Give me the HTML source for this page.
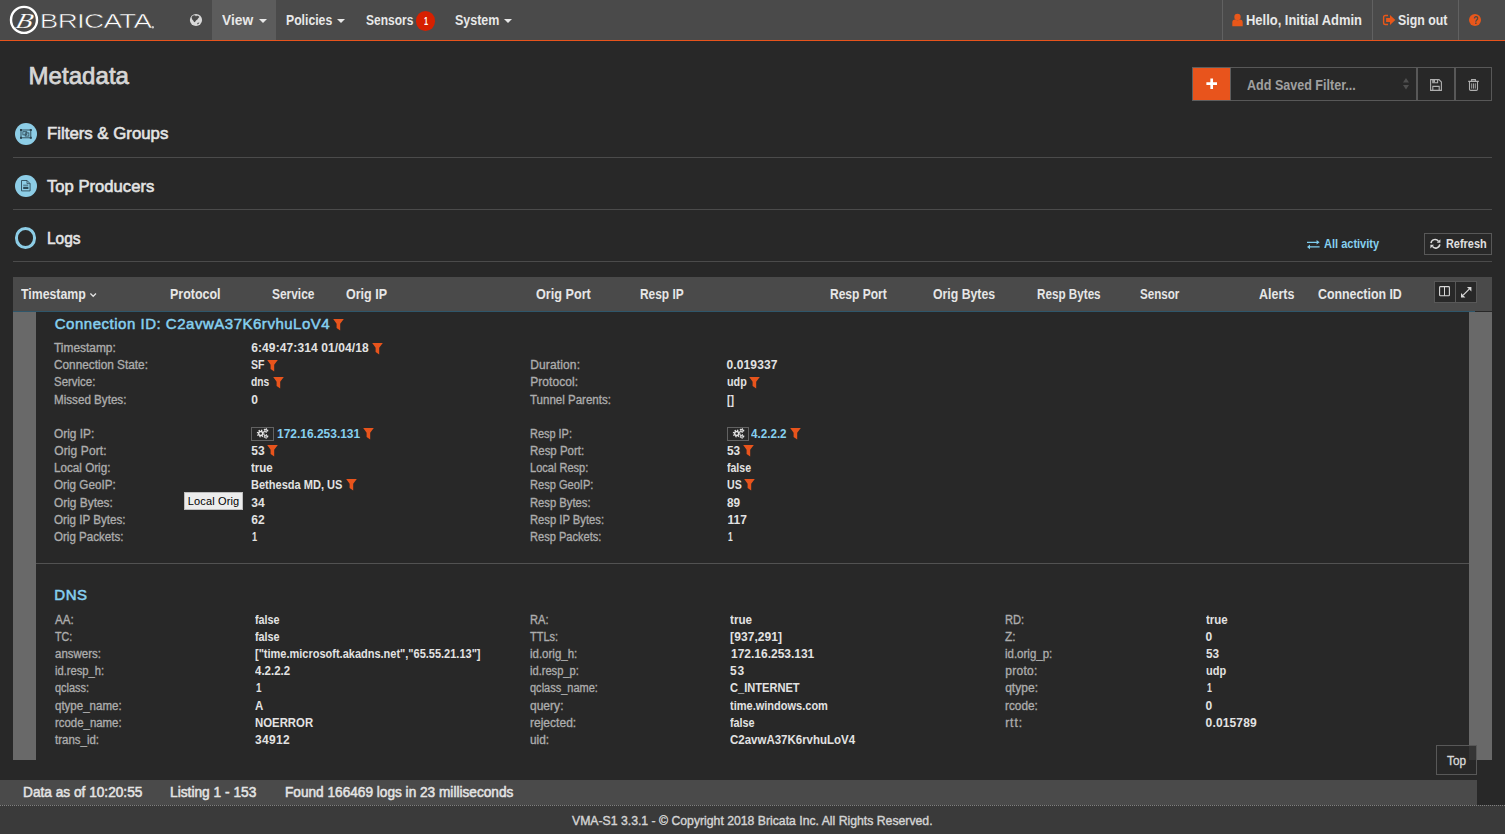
<!DOCTYPE html>
<html lang="en">
<head>
<meta charset="utf-8">
<title>Bricata - Metadata</title>
<style>
*{box-sizing:border-box}
html,body{margin:0;padding:0}
body{width:1505px;height:834px;overflow:hidden;background:#282828;font-family:"Liberation Sans",sans-serif;position:relative}
.b{position:absolute}
.t{position:absolute;white-space:pre;line-height:1;transform-origin:0 0;font-family:"Liberation Sans",sans-serif}
svg{position:absolute;overflow:visible}
.nav{left:0;top:0;width:1505px;height:40px;background:#4a4a4a}
.navline{left:0;top:40px;width:1505px;height:1px;background:#e8541c}
.sep{top:0;width:1px;height:40px;background:#616161}
.hr{left:13px;width:1479px;height:1px;background:#4b4b4b}
.btn{border:1px solid #585858;background:#282828}
</style>
</head>
<body>
<!-- navbar -->
<div class="b nav"></div>
<div class="b" style="left:212px;top:0;width:64px;height:40px;background:#5c5c5c"></div>
<div class="b navline"></div>
<div class="b sep" style="left:1222px"></div>
<div class="b sep" style="left:1372px"></div>
<div class="b sep" style="left:1458px"></div>

<!-- logo -->
<svg style="left:0;top:0" width="170" height="40" viewBox="0 0 170 40">
  <circle cx="24" cy="19.9" r="13" fill="none" stroke="#fff" stroke-width="2.4"/>
  <text transform="translate(14.6 27.6) skewX(-16) scale(1.25 1)" font-family="Liberation Serif, serif" font-style="italic" font-size="21.5" fill="#fff" stroke="#4a4a4a" stroke-width="0.15">B</text>
  <text transform="translate(39.8 28.2) scale(1.39 1)" font-family="Liberation Sans, sans-serif" font-size="20" letter-spacing="-0.5" fill="#fff" stroke="#4a4a4a" stroke-width="0.5">BRICATA</text>
  <circle cx="152.8" cy="27.2" r="1.2" fill="#c8c8c8"/>
</svg>

<!-- globe -->
<svg style="left:189px;top:13px" width="14" height="14" viewBox="0 0 14 14">
  <circle cx="7" cy="7" r="6.1" fill="#d8d8d8"/>
  <path d="M2.6 4.6 L3.4 3 L5 2.2 L6.4 2.6 L7 3.6 L7.8 2.6 L9.4 3 L10.4 4 L9.2 5.2 L8.4 6.6 L7 7.4 L6.2 8.8 L5.2 9.2 L4.2 7.6 L3.2 6.4 Z" fill="#4a4a4a"/>
  <path d="M8.2 10 L10.4 9.4 L9.8 10.6 L8.6 11.4 Z" fill="#4a4a4a"/>
</svg>

<!-- carets -->
<svg style="left:258.5px;top:19.2px" width="8" height="4" viewBox="0 0 8 4"><path d="M0 0H8L4 4Z" fill="#e8e8e8"/></svg>
<svg style="left:337px;top:19.2px" width="8" height="4" viewBox="0 0 8 4"><path d="M0 0H8L4 4Z" fill="#e8e8e8"/></svg>
<svg style="left:504px;top:19.2px" width="8" height="4" viewBox="0 0 8 4"><path d="M0 0H8L4 4Z" fill="#e8e8e8"/></svg>

<!-- badge -->
<div class="b" style="left:415.8px;top:11.2px;width:19.6px;height:19.6px;border-radius:50%;background:#d62000"></div>

<!-- user icon -->
<svg style="left:1232px;top:13px" width="11" height="14" viewBox="0 0 11 14">
  <circle cx="5.5" cy="3.9" r="3.2" fill="#e8571a"/>
  <path d="M0.3 13.2 V9.6 Q0.3 6.6 3 6.5 Q5.5 8 8 6.5 Q10.7 6.6 10.7 9.6 V13.2 Z" fill="#e8571a"/>
</svg>
<!-- sign out icon -->
<svg style="left:1382px;top:14px" width="14" height="12" viewBox="0 0 14 12">
  <path d="M6 1.5 H3.4 Q1.6 1.5 1.6 3.3 V8.7 Q1.6 10.5 3.4 10.5 H6" fill="none" stroke="#e8571a" stroke-width="1.4"/>
  <path d="M4.1 4.1 H8 V0.9 L13.3 6 L8 11.1 V8 H4.1 Z" fill="#e8571a"/>
</svg>
<!-- question -->
<div class="b" style="left:1468.9px;top:13.8px;width:12.4px;height:12.4px;border-radius:50%;background:#e8571a"></div>

<!-- saved filter bar -->
<div class="b" style="left:1192px;top:67px;width:39px;height:34px;background:#e8541c;border:1px solid #5e5e5e"></div>
<div class="b btn" style="left:1231px;top:67px;width:186px;height:34px;border-left:none"></div>
<div class="b btn" style="left:1417px;top:67px;width:38px;height:34px"></div>
<div class="b btn" style="left:1455px;top:67px;width:37px;height:34px"></div>
<svg style="left:1205.8px;top:77.7px" width="11.4" height="11.4" viewBox="0 0 12 12"><path d="M4.6 0.4H7.4V4.6H11.6V7.4H7.4V11.6H4.6V7.4H0.4V4.6H4.6Z" fill="#fff"/></svg>
<svg style="left:1403px;top:78.3px" width="6" height="11.4" viewBox="0 0 6 11.4"><path d="M0 4.4L3 0L6 4.4Z M0 7L3 11.4L6 7Z" fill="#4f4f4f"/></svg>
<!-- save -->
<svg style="left:1430.4px;top:79px" width="12" height="12" viewBox="0 0 12 12">
  <path d="M0.6 0.6 H9 L11.4 3 V11.4 H0.6 Z" fill="none" stroke="#b0b0b0" stroke-width="1.1"/>
  <path d="M2.8 0.8 V3.8 H7.6 V0.8" fill="none" stroke="#b0b0b0" stroke-width="1.1"/><rect x="3.2" y="1" width="1.8" height="2.4" fill="#b0b0b0"/>
  <path d="M2.8 11.2 V7.4 H9.2 V11.2" fill="none" stroke="#b0b0b0" stroke-width="1.1"/>
</svg>
<!-- trash -->
<svg style="left:1468px;top:79px" width="11" height="12" viewBox="0 0 11 12">
  <path d="M0.2 2.4 H10.8 M3.6 2.2 V0.6 H7.4 V2.2" fill="none" stroke="#b0b0b0" stroke-width="1.1"/>
  <path d="M1.5 2.6 V10.2 Q1.5 11.4 2.7 11.4 H8.3 Q9.5 11.4 9.5 10.2 V2.6" fill="none" stroke="#b0b0b0" stroke-width="1.1"/>
  <path d="M3.7 4.4 V9.6 M5.5 4.4 V9.6 M7.3 4.4 V9.6" fill="none" stroke="#b0b0b0" stroke-width="0.9"/>
</svg>

<!-- sections -->
<div class="b" style="left:14.8px;top:123px;width:21.8px;height:21.8px;border-radius:50%;background:#8dcde6"></div>
<svg style="left:19.6px;top:129px" width="11.8" height="9.8" viewBox="0 0 11.8 9.8">
  <rect x="1" y="1" width="9.8" height="7.8" fill="none" stroke="#2b4551" stroke-width="0.9"/>
  <rect x="0" y="0" width="2" height="2" fill="#2b4551"/><rect x="9.8" y="0" width="2" height="2" fill="#2b4551"/>
  <rect x="0" y="7.8" width="2" height="2" fill="#2b4551"/><rect x="9.8" y="7.8" width="2" height="2" fill="#2b4551"/>
  <rect x="2.9" y="2.7" width="3.9" height="3.2" fill="none" stroke="#2b4551" stroke-width="0.8"/>
  <rect x="5.2" y="3.9" width="3.7" height="3.2" fill="none" stroke="#2b4551" stroke-width="0.8"/>
</svg>
<div class="b hr" style="top:157px"></div>
<div class="b" style="left:14.8px;top:175.2px;width:21.8px;height:21.8px;border-radius:50%;background:#8dcde6"></div>
<svg style="left:21px;top:180.4px" width="9.6" height="11.4" viewBox="0 0 9.6 11.4">
  <path d="M0.5 0.5 H6 L9.1 3.6 V10.9 H0.5 Z" fill="none" stroke="#2f4a57" stroke-width="0.9"/>
  <path d="M6 0.5 V3.6 H9.1" fill="none" stroke="#2f4a57" stroke-width="0.8"/>
  <path d="M2.2 5.2 H7.2" stroke="#2f4a57" stroke-width="0.8"/>
  <rect x="2.2" y="6.8" width="5.2" height="2.2" fill="#2f4a57"/>
</svg>
<div class="b hr" style="top:209px"></div>
<div class="b" style="left:14.8px;top:227.2px;width:21.6px;height:21.6px;border-radius:50%;border:3px solid #8dcde6"></div>
<div class="b hr" style="top:261px"></div>

<!-- all activity / refresh -->
<svg style="left:1307.4px;top:239.6px" width="12.6" height="9.2" viewBox="0 0 12.6 9.2">
  <path d="M0 2.3 H10 M2.6 6.9 H12.6" stroke="#7fcdee" stroke-width="1.3" fill="none"/>
  <path d="M9.6 0 L12.6 2.3 L9.6 4.6 Z M3 4.6 L0 6.9 L3 9.2 Z" fill="#7fcdee"/>
</svg>
<div class="b btn" style="left:1424px;top:233px;width:68px;height:22px"></div>
<svg style="left:1429.6px;top:239.2px" width="10.8" height="9.6" viewBox="0 0 10.8 9.6">
  <path d="M1 4.2 A4.1 4.1 0 0 1 8.4 2.2" fill="none" stroke="#dcdcdc" stroke-width="1.5"/>
  <path d="M9.8 5.4 A4.1 4.1 0 0 1 2.4 7.4" fill="none" stroke="#dcdcdc" stroke-width="1.5"/>
  <path d="M10.4 0.2 V3.8 H6.8 Z M0.4 9.4 V5.8 H4 Z" fill="#dcdcdc"/>
</svg>

<!-- table header -->
<div class="b" style="left:13px;top:277px;width:1479px;height:34px;background:#4a4a4a"></div>
<div class="b" style="left:13px;top:311px;width:1462px;height:1px;background:#2f566a"></div>
<svg style="left:90px;top:292.6px" width="6.4" height="4" viewBox="0 0 6.4 4"><path d="M0.4 0.5 L3.2 3.3 L6 0.5" fill="none" stroke="#e4e4e4" stroke-width="1.25"/></svg>
<div class="b btn" style="left:1434px;top:281px;width:22px;height:22px"></div>
<div class="b btn" style="left:1455px;top:281px;width:22px;height:22px"></div>
<svg style="left:1439.4px;top:286.4px" width="11" height="10.4" viewBox="0 0 11 10.4">
  <rect x="0.6" y="0.6" width="9.8" height="9.2" rx="0.8" fill="none" stroke="#d8d8d8" stroke-width="1.1"/>
  <path d="M5.5 0.6 V9.8" stroke="#d8d8d8" stroke-width="1"/>
</svg>
<svg style="left:1461px;top:286.8px" width="10.4" height="10.4" viewBox="0 0 10.4 10.4">
  <path d="M2.2 8.2 L8.2 2.2" stroke="#d8d8d8" stroke-width="1.2"/>
  <path d="M6 0 H10.4 V4.4 Z M0 6 V10.4 H4.4 Z" fill="#d8d8d8"/>
</svg>

<!-- side bars -->
<div class="b" style="left:13px;top:312px;width:23px;height:448px;background:#696969"></div>
<div class="b" style="left:1469px;top:312px;width:23px;height:448px;background:#696969"></div>
<div class="b" style="left:36px;top:563px;width:1433px;height:1px;background:#525252"></div>

<!-- gear buttons -->
<div class="b" style="left:251px;top:427px;width:23px;height:14px;border:1px solid #626262;background:#282828"></div>
<div class="b" style="left:727px;top:427px;width:22.4px;height:14px;border:1px solid #626262;background:#282828"></div>
<svg style="left:251px;top:427px" width="23" height="14" viewBox="0 0 23 14"><circle cx="9.7" cy="6.5" r="3.1" fill="none" stroke="#e4e4e4" stroke-width="1.70" stroke-dasharray="1.217 1.217"/><circle cx="9.7" cy="6.5" r="2.7" fill="#e4e4e4"/><circle cx="9.7" cy="6.5" r="1.25" fill="#282828"/><circle cx="14.9" cy="3.5" r="1.7" fill="none" stroke="#e4e4e4" stroke-width="1.40" stroke-dasharray="0.890 0.890"/><circle cx="14.9" cy="3.5" r="1.45" fill="#e4e4e4"/><circle cx="14.9" cy="3.5" r="0.55" fill="#282828"/><circle cx="14.9" cy="9.35" r="1.7" fill="none" stroke="#e4e4e4" stroke-width="1.40" stroke-dasharray="0.890 0.890"/><circle cx="14.9" cy="9.35" r="1.45" fill="#e4e4e4"/><circle cx="14.9" cy="9.35" r="0.55" fill="#282828"/></svg>
<svg style="left:727px;top:427px" width="23" height="14" viewBox="0 0 23 14"><circle cx="9.7" cy="6.5" r="3.1" fill="none" stroke="#e4e4e4" stroke-width="1.70" stroke-dasharray="1.217 1.217"/><circle cx="9.7" cy="6.5" r="2.7" fill="#e4e4e4"/><circle cx="9.7" cy="6.5" r="1.25" fill="#282828"/><circle cx="14.9" cy="3.5" r="1.7" fill="none" stroke="#e4e4e4" stroke-width="1.40" stroke-dasharray="0.890 0.890"/><circle cx="14.9" cy="3.5" r="1.45" fill="#e4e4e4"/><circle cx="14.9" cy="3.5" r="0.55" fill="#282828"/><circle cx="14.9" cy="9.35" r="1.7" fill="none" stroke="#e4e4e4" stroke-width="1.40" stroke-dasharray="0.890 0.890"/><circle cx="14.9" cy="9.35" r="1.45" fill="#e4e4e4"/><circle cx="14.9" cy="9.35" r="0.55" fill="#282828"/></svg>

<!-- tooltip -->
<div class="b" style="left:184px;top:492px;width:59px;height:18px;background:#ececec;border:1px solid #bdbdbd"></div>

<!-- top button -->
<div class="b" style="left:1436px;top:745px;width:41px;height:29.5px;border:1px solid #585858;background:rgba(40,40,40,.8)"></div>

<!-- status + footer -->
<div class="b" style="left:0;top:780px;width:1477px;height:25px;background:#4a4a4a"></div>
<div class="b" style="left:0;top:805px;width:1505px;height:29px;background:#3a3a3a;border-top:1px dotted #808080"></div>

<svg style="left:332.8px;top:319.2px" width="11" height="11.4" viewBox="0 0 11 11.4"><path d="M0.2 0 H10.8 L7.2 4.8 V11.4 L3.6 9 V4.8 Z" fill="#e8541c"/></svg>
<svg style="left:372px;top:342.9px" width="11" height="11.4" viewBox="0 0 11 11.4"><path d="M0.2 0 H10.8 L7.2 4.8 V11.4 L3.6 9 V4.8 Z" fill="#e8541c"/></svg>
<svg style="left:266.8px;top:360.0px" width="11" height="11.4" viewBox="0 0 11 11.4"><path d="M0.2 0 H10.8 L7.2 4.8 V11.4 L3.6 9 V4.8 Z" fill="#e8541c"/></svg>
<svg style="left:272.8px;top:377.2px" width="11" height="11.4" viewBox="0 0 11 11.4"><path d="M0.2 0 H10.8 L7.2 4.8 V11.4 L3.6 9 V4.8 Z" fill="#e8541c"/></svg>
<svg style="left:363px;top:427.8px" width="11" height="11.4" viewBox="0 0 11 11.4"><path d="M0.2 0 H10.8 L7.2 4.8 V11.4 L3.6 9 V4.8 Z" fill="#e8541c"/></svg>
<svg style="left:267.3px;top:445.0px" width="11" height="11.4" viewBox="0 0 11 11.4"><path d="M0.2 0 H10.8 L7.2 4.8 V11.4 L3.6 9 V4.8 Z" fill="#e8541c"/></svg>
<svg style="left:345.7px;top:479.2px" width="11" height="11.4" viewBox="0 0 11 11.4"><path d="M0.2 0 H10.8 L7.2 4.8 V11.4 L3.6 9 V4.8 Z" fill="#e8541c"/></svg>
<svg style="left:749.2px;top:377.2px" width="11" height="11.4" viewBox="0 0 11 11.4"><path d="M0.2 0 H10.8 L7.2 4.8 V11.4 L3.6 9 V4.8 Z" fill="#e8541c"/></svg>
<svg style="left:789.9px;top:427.8px" width="11" height="11.4" viewBox="0 0 11 11.4"><path d="M0.2 0 H10.8 L7.2 4.8 V11.4 L3.6 9 V4.8 Z" fill="#e8541c"/></svg>
<svg style="left:743px;top:445.0px" width="11" height="11.4" viewBox="0 0 11 11.4"><path d="M0.2 0 H10.8 L7.2 4.8 V11.4 L3.6 9 V4.8 Z" fill="#e8541c"/></svg>
<svg style="left:744.2px;top:479.2px" width="11" height="11.4" viewBox="0 0 11 11.4"><path d="M0.2 0 H10.8 L7.2 4.8 V11.4 L3.6 9 V4.8 Z" fill="#e8541c"/></svg>
<span class="t" style="left:221.80px;top:12.90px;font-size:14px;color:#e8e8e8;font-weight:700;transform:scaleX(0.9823);">View</span>
<span class="t" style="left:286.00px;top:12.90px;font-size:14px;color:#e8e8e8;font-weight:700;transform:scaleX(0.8733);">Policies</span>
<span class="t" style="left:365.50px;top:12.90px;font-size:14px;color:#e8e8e8;font-weight:700;transform:scaleX(0.8564);">Sensors</span>
<span class="t" style="left:455.00px;top:12.90px;font-size:14px;color:#e8e8e8;font-weight:700;transform:scaleX(0.8914);">System</span>
<span class="t" style="left:1245.80px;top:12.90px;font-size:14px;color:#e8e8e8;font-weight:700;transform:scaleX(0.9246);">Hello, Initial Admin</span>
<span class="t" style="left:1398.40px;top:12.90px;font-size:14px;color:#e8e8e8;font-weight:700;transform:scaleX(0.8806);">Sign out</span>
<span class="t" style="left:423.50px;top:16.10px;font-size:11.5px;color:#ffffff;font-weight:700;transform:scaleX(0.6429);">1</span>
<span class="t" style="left:1472.70px;top:14.80px;font-size:10.5px;color:#4a4a4a;font-weight:700;transform:scaleX(0.8333);">?</span>
<span class="t" style="left:28.57px;top:63.90px;font-size:24px;color:#d6d6d6;letter-spacing:0.047px;-webkit-text-stroke:0.75px #d6d6d6;">Metadata</span>
<span class="t" style="left:1247.40px;top:78.00px;font-size:14px;color:#a0a0a0;font-weight:700;transform:scaleX(0.8964);">Add Saved Filter...</span>
<span class="t" style="left:46.91px;top:125.30px;font-size:17px;color:#e4e4e4;transform:scaleX(0.9876);-webkit-text-stroke:0.6px #e4e4e4;">Filters &amp; Groups</span>
<span class="t" style="left:46.79px;top:177.60px;font-size:17px;color:#e4e4e4;transform:scaleX(0.9789);-webkit-text-stroke:0.6px #e4e4e4;">Top Producers</span>
<span class="t" style="left:46.96px;top:229.50px;font-size:17px;color:#e4e4e4;transform:scaleX(0.9120);-webkit-text-stroke:0.6px #e4e4e4;">Logs</span>
<span class="t" style="left:1324.30px;top:237.90px;font-size:12px;color:#86d0f0;font-weight:700;transform:scaleX(0.9180);">All activity</span>
<span class="t" style="left:1445.70px;top:237.90px;font-size:12px;color:#e0e0e0;font-weight:700;transform:scaleX(0.9086);">Refresh</span>
<span class="t" style="left:21.30px;top:287.00px;font-size:14px;color:#e6e6e6;font-weight:700;transform:scaleX(0.8796);">Timestamp</span>
<span class="t" style="left:169.60px;top:287.00px;font-size:14px;color:#e6e6e6;font-weight:700;transform:scaleX(0.8893);">Protocol</span>
<span class="t" style="left:272.40px;top:287.00px;font-size:14px;color:#e6e6e6;font-weight:700;transform:scaleX(0.8514);">Service</span>
<span class="t" style="left:346.00px;top:287.00px;font-size:14px;color:#e6e6e6;font-weight:700;transform:scaleX(0.8934);">Orig IP</span>
<span class="t" style="left:535.90px;top:287.00px;font-size:14px;color:#e6e6e6;font-weight:700;transform:scaleX(0.9032);">Orig Port</span>
<span class="t" style="left:640.00px;top:287.00px;font-size:14px;color:#e6e6e6;font-weight:700;transform:scaleX(0.8508);">Resp IP</span>
<span class="t" style="left:829.60px;top:287.00px;font-size:14px;color:#e6e6e6;font-weight:700;transform:scaleX(0.8591);">Resp Port</span>
<span class="t" style="left:932.70px;top:287.00px;font-size:14px;color:#e6e6e6;font-weight:700;transform:scaleX(0.8773);">Orig Bytes</span>
<span class="t" style="left:1037.00px;top:287.00px;font-size:14px;color:#e6e6e6;font-weight:700;transform:scaleX(0.8343);">Resp Bytes</span>
<span class="t" style="left:1140.00px;top:287.00px;font-size:14px;color:#e6e6e6;font-weight:700;transform:scaleX(0.8289);">Sensor</span>
<span class="t" style="left:1258.50px;top:287.00px;font-size:14px;color:#e6e6e6;font-weight:700;transform:scaleX(0.8898);">Alerts</span>
<span class="t" style="left:1318.30px;top:287.00px;font-size:14px;color:#e6e6e6;font-weight:700;transform:scaleX(0.8832);">Connection ID</span>
<span class="t" style="left:54.75px;top:315.50px;font-size:15px;color:#86d0f0;letter-spacing:0.514px;-webkit-text-stroke:0.5px #86d0f0;">Connection ID: C2avwA37K6rvhuLoV4</span>
<span class="t" style="left:54.36px;top:341.80px;font-size:12px;color:#adadad;transform:scaleX(0.9933);-webkit-text-stroke:0.32px #adadad;">Timestamp:</span>
<span class="t" style="left:251.20px;top:341.80px;font-size:12px;color:#e2e2e2;font-weight:700;letter-spacing:0.108px;">6:49:47:314 01/04/18</span>
<span class="t" style="left:54.36px;top:358.90px;font-size:12px;color:#adadad;transform:scaleX(0.9845);-webkit-text-stroke:0.32px #adadad;">Connection State:</span>
<span class="t" style="left:251.20px;top:358.90px;font-size:12px;color:#e2e2e2;font-weight:700;transform:scaleX(0.8798);">SF</span>
<span class="t" style="left:54.35px;top:376.10px;font-size:12px;color:#adadad;transform:scaleX(0.9531);-webkit-text-stroke:0.32px #adadad;">Service:</span>
<span class="t" style="left:251.20px;top:376.10px;font-size:12px;color:#e2e2e2;font-weight:700;transform:scaleX(0.8541);">dns</span>
<span class="t" style="left:54.36px;top:393.90px;font-size:12px;color:#adadad;transform:scaleX(0.9695);-webkit-text-stroke:0.32px #adadad;">Missed Bytes:</span>
<span class="t" style="left:251.20px;top:393.90px;font-size:12px;color:#e2e2e2;font-weight:700;">0</span>
<span class="t" style="left:54.36px;top:427.50px;font-size:12px;color:#adadad;transform:scaleX(0.9911);-webkit-text-stroke:0.32px #adadad;">Orig IP:</span>
<span class="t" style="left:54.36px;top:444.70px;font-size:12px;color:#adadad;letter-spacing:0.085px;-webkit-text-stroke:0.32px #adadad;">Orig Port:</span>
<span class="t" style="left:251.20px;top:444.70px;font-size:12px;color:#e2e2e2;font-weight:700;letter-spacing:0.026px;">53</span>
<span class="t" style="left:54.36px;top:461.80px;font-size:12px;color:#adadad;transform:scaleX(0.9722);-webkit-text-stroke:0.32px #adadad;">Local Orig:</span>
<span class="t" style="left:251.20px;top:461.80px;font-size:12px;color:#e2e2e2;font-weight:700;transform:scaleX(0.9610);">true</span>
<span class="t" style="left:54.36px;top:478.90px;font-size:12px;color:#adadad;transform:scaleX(0.9756);-webkit-text-stroke:0.32px #adadad;">Orig GeoIP:</span>
<span class="t" style="left:251.20px;top:478.90px;font-size:12px;color:#e2e2e2;font-weight:700;transform:scaleX(0.9200);">Bethesda MD, US</span>
<span class="t" style="left:54.36px;top:496.80px;font-size:12px;color:#adadad;transform:scaleX(0.9910);-webkit-text-stroke:0.32px #adadad;">Orig Bytes:</span>
<span class="t" style="left:251.20px;top:496.80px;font-size:12px;color:#e2e2e2;font-weight:700;letter-spacing:0.026px;">34</span>
<span class="t" style="left:54.36px;top:513.90px;font-size:12px;color:#adadad;transform:scaleX(0.9702);-webkit-text-stroke:0.32px #adadad;">Orig IP Bytes:</span>
<span class="t" style="left:251.20px;top:513.90px;font-size:12px;color:#e2e2e2;font-weight:700;letter-spacing:0.026px;">62</span>
<span class="t" style="left:54.35px;top:531.00px;font-size:12px;color:#adadad;transform:scaleX(0.9652);-webkit-text-stroke:0.32px #adadad;">Orig Packets:</span>
<span class="t" style="left:252.30px;top:531.00px;font-size:12px;color:#e2e2e2;font-weight:700;transform:scaleX(0.7714);">1</span>
<span class="t" style="left:277.10px;top:427.50px;font-size:12px;color:#86d0f0;font-weight:700;transform:scaleX(0.9971);">172.16.253.131</span>
<span class="t" style="left:530.16px;top:358.90px;font-size:12px;color:#adadad;letter-spacing:0.140px;-webkit-text-stroke:0.32px #adadad;">Duration:</span>
<span class="t" style="left:726.60px;top:358.90px;font-size:12px;color:#e2e2e2;font-weight:700;letter-spacing:0.103px;">0.019337</span>
<span class="t" style="left:530.16px;top:376.10px;font-size:12px;color:#adadad;letter-spacing:0.070px;-webkit-text-stroke:0.32px #adadad;">Protocol:</span>
<span class="t" style="left:726.60px;top:376.10px;font-size:12px;color:#e2e2e2;font-weight:700;transform:scaleX(0.8957);">udp</span>
<span class="t" style="left:530.15px;top:393.90px;font-size:12px;color:#adadad;transform:scaleX(0.9602);-webkit-text-stroke:0.32px #adadad;">Tunnel Parents:</span>
<span class="t" style="left:726.60px;top:393.90px;font-size:12px;color:#e2e2e2;font-weight:700;transform:scaleX(0.8754);">[]</span>
<span class="t" style="left:530.15px;top:427.50px;font-size:12px;color:#adadad;transform:scaleX(0.9108);-webkit-text-stroke:0.32px #adadad;">Resp IP:</span>
<span class="t" style="left:530.15px;top:444.70px;font-size:12px;color:#adadad;transform:scaleX(0.9546);-webkit-text-stroke:0.32px #adadad;">Resp Port:</span>
<span class="t" style="left:726.60px;top:444.70px;font-size:12px;color:#e2e2e2;font-weight:700;transform:scaleX(0.9873);">53</span>
<span class="t" style="left:530.15px;top:461.80px;font-size:12px;color:#adadad;transform:scaleX(0.9186);-webkit-text-stroke:0.32px #adadad;">Local Resp:</span>
<span class="t" style="left:726.60px;top:461.80px;font-size:12px;color:#e2e2e2;font-weight:700;transform:scaleX(0.8780);">false</span>
<span class="t" style="left:530.15px;top:478.90px;font-size:12px;color:#adadad;transform:scaleX(0.9230);-webkit-text-stroke:0.32px #adadad;">Resp GeoIP:</span>
<span class="t" style="left:726.60px;top:478.90px;font-size:12px;color:#e2e2e2;font-weight:700;transform:scaleX(0.8820);">US</span>
<span class="t" style="left:530.15px;top:496.80px;font-size:12px;color:#adadad;transform:scaleX(0.9369);-webkit-text-stroke:0.32px #adadad;">Resp Bytes:</span>
<span class="t" style="left:726.60px;top:496.80px;font-size:12px;color:#e2e2e2;font-weight:700;transform:scaleX(0.9800);">89</span>
<span class="t" style="left:530.15px;top:513.90px;font-size:12px;color:#adadad;transform:scaleX(0.9351);-webkit-text-stroke:0.32px #adadad;">Resp IP Bytes:</span>
<span class="t" style="left:727.50px;top:513.90px;font-size:12px;color:#e2e2e2;font-weight:700;letter-spacing:0.057px;">117</span>
<span class="t" style="left:530.15px;top:531.00px;font-size:12px;color:#adadad;transform:scaleX(0.9217);-webkit-text-stroke:0.32px #adadad;">Resp Packets:</span>
<span class="t" style="left:727.50px;top:531.00px;font-size:12px;color:#e2e2e2;font-weight:700;transform:scaleX(0.7000);">1</span>
<span class="t" style="left:750.80px;top:427.50px;font-size:12px;color:#86d0f0;font-weight:700;transform:scaleX(0.9697);">4.2.2.2</span>
<span class="t" style="left:187.80px;top:496.40px;font-size:11px;color:#000000;letter-spacing:0.132px;">Local Orig</span>
<span class="t" style="left:54.17px;top:586.70px;font-size:15px;color:#86d0f0;letter-spacing:0.642px;-webkit-text-stroke:0.55px #86d0f0;">DNS</span>
<span class="t" style="left:55.06px;top:614.00px;font-size:12px;color:#adadad;transform:scaleX(0.9727);-webkit-text-stroke:0.32px #adadad;">AA:</span>
<span class="t" style="left:254.90px;top:614.00px;font-size:12px;color:#e2e2e2;font-weight:700;transform:scaleX(0.8996);">false</span>
<span class="t" style="left:55.04px;top:631.00px;font-size:12px;color:#adadad;transform:scaleX(0.8904);-webkit-text-stroke:0.32px #adadad;">TC:</span>
<span class="t" style="left:254.90px;top:631.00px;font-size:12px;color:#e2e2e2;font-weight:700;transform:scaleX(0.8996);">false</span>
<span class="t" style="left:55.05px;top:648.00px;font-size:12px;color:#adadad;transform:scaleX(0.9562);-webkit-text-stroke:0.32px #adadad;">answers:</span>
<span class="t" style="left:254.90px;top:648.00px;font-size:12px;color:#e2e2e2;font-weight:700;transform:scaleX(0.9160);">[&quot;time.microsoft.akadns.net&quot;,&quot;65.55.21.13&quot;]</span>
<span class="t" style="left:55.05px;top:665.00px;font-size:12px;color:#adadad;transform:scaleX(0.9319);-webkit-text-stroke:0.32px #adadad;">id.resp_h:</span>
<span class="t" style="left:254.90px;top:665.00px;font-size:12px;color:#e2e2e2;font-weight:700;transform:scaleX(0.9562);">4.2.2.2</span>
<span class="t" style="left:55.05px;top:682.00px;font-size:12px;color:#adadad;transform:scaleX(0.9134);-webkit-text-stroke:0.32px #adadad;">qclass:</span>
<span class="t" style="left:255.80px;top:682.00px;font-size:12px;color:#e2e2e2;font-weight:700;transform:scaleX(0.8286);">1</span>
<span class="t" style="left:55.05px;top:699.80px;font-size:12px;color:#adadad;transform:scaleX(0.9601);-webkit-text-stroke:0.32px #adadad;">qtype_name:</span>
<span class="t" style="left:254.90px;top:699.80px;font-size:12px;color:#e2e2e2;font-weight:700;transform:scaleX(0.9556);">A</span>
<span class="t" style="left:55.05px;top:716.80px;font-size:12px;color:#adadad;transform:scaleX(0.9510);-webkit-text-stroke:0.32px #adadad;">rcode_name:</span>
<span class="t" style="left:254.90px;top:716.80px;font-size:12px;color:#e2e2e2;font-weight:700;transform:scaleX(0.9470);">NOERROR</span>
<span class="t" style="left:55.05px;top:733.80px;font-size:12px;color:#adadad;transform:scaleX(0.9563);-webkit-text-stroke:0.32px #adadad;">trans_id:</span>
<span class="t" style="left:254.90px;top:733.80px;font-size:12px;color:#e2e2e2;font-weight:700;letter-spacing:0.351px;">34912</span>
<span class="t" style="left:529.95px;top:614.00px;font-size:12px;color:#adadad;transform:scaleX(0.9255);-webkit-text-stroke:0.32px #adadad;">RA:</span>
<span class="t" style="left:730.10px;top:614.00px;font-size:12px;color:#e2e2e2;font-weight:700;transform:scaleX(0.9697);">true</span>
<span class="t" style="left:529.95px;top:631.00px;font-size:12px;color:#adadad;transform:scaleX(0.9134);-webkit-text-stroke:0.32px #adadad;">TTLs:</span>
<span class="t" style="left:730.10px;top:631.00px;font-size:12px;color:#e2e2e2;font-weight:700;letter-spacing:0.078px;">[937,291]</span>
<span class="t" style="left:529.95px;top:648.00px;font-size:12px;color:#adadad;transform:scaleX(0.9564);-webkit-text-stroke:0.32px #adadad;">id.orig_h:</span>
<span class="t" style="left:731.00px;top:648.00px;font-size:12px;color:#e2e2e2;font-weight:700;transform:scaleX(0.9983);">172.16.253.131</span>
<span class="t" style="left:529.95px;top:665.00px;font-size:12px;color:#adadad;transform:scaleX(0.9263);-webkit-text-stroke:0.32px #adadad;">id.resp_p:</span>
<span class="t" style="left:730.10px;top:665.00px;font-size:12px;color:#e2e2e2;font-weight:700;letter-spacing:0.626px;">53</span>
<span class="t" style="left:529.95px;top:682.00px;font-size:12px;color:#adadad;transform:scaleX(0.9173);-webkit-text-stroke:0.32px #adadad;">qclass_name:</span>
<span class="t" style="left:730.10px;top:682.00px;font-size:12px;color:#e2e2e2;font-weight:700;transform:scaleX(0.9236);">C_INTERNET</span>
<span class="t" style="left:529.96px;top:699.80px;font-size:12px;color:#adadad;letter-spacing:0.032px;-webkit-text-stroke:0.32px #adadad;">query:</span>
<span class="t" style="left:730.10px;top:699.80px;font-size:12px;color:#e2e2e2;font-weight:700;transform:scaleX(0.9178);">time.windows.com</span>
<span class="t" style="left:529.96px;top:716.80px;font-size:12px;color:#adadad;letter-spacing:0.024px;-webkit-text-stroke:0.32px #adadad;">rejected:</span>
<span class="t" style="left:730.10px;top:716.80px;font-size:12px;color:#e2e2e2;font-weight:700;transform:scaleX(0.8996);">false</span>
<span class="t" style="left:529.96px;top:733.80px;font-size:12px;color:#adadad;transform:scaleX(0.9879);-webkit-text-stroke:0.32px #adadad;">uid:</span>
<span class="t" style="left:730.10px;top:733.80px;font-size:12px;color:#e2e2e2;font-weight:700;transform:scaleX(0.9569);">C2avwA37K6rvhuLoV4</span>
<span class="t" style="left:1005.15px;top:614.00px;font-size:12px;color:#adadad;transform:scaleX(0.9248);-webkit-text-stroke:0.32px #adadad;">RD:</span>
<span class="t" style="left:1205.60px;top:614.00px;font-size:12px;color:#e2e2e2;font-weight:700;transform:scaleX(0.9567);">true</span>
<span class="t" style="left:1005.16px;top:631.00px;font-size:12px;color:#adadad;transform:scaleX(0.9859);-webkit-text-stroke:0.32px #adadad;">Z:</span>
<span class="t" style="left:1205.60px;top:631.00px;font-size:12px;color:#e2e2e2;font-weight:700;">0</span>
<span class="t" style="left:1005.15px;top:648.00px;font-size:12px;color:#adadad;transform:scaleX(0.9564);-webkit-text-stroke:0.32px #adadad;">id.orig_p:</span>
<span class="t" style="left:1205.60px;top:648.00px;font-size:12px;color:#e2e2e2;font-weight:700;transform:scaleX(0.9800);">53</span>
<span class="t" style="left:1005.16px;top:665.00px;font-size:12px;color:#adadad;letter-spacing:0.306px;-webkit-text-stroke:0.32px #adadad;">proto:</span>
<span class="t" style="left:1205.60px;top:665.00px;font-size:12px;color:#e2e2e2;font-weight:700;transform:scaleX(0.9141);">udp</span>
<span class="t" style="left:1005.16px;top:682.00px;font-size:12px;color:#adadad;letter-spacing:0.025px;-webkit-text-stroke:0.32px #adadad;">qtype:</span>
<span class="t" style="left:1206.50px;top:682.00px;font-size:12px;color:#e2e2e2;font-weight:700;transform:scaleX(0.7429);">1</span>
<span class="t" style="left:1005.16px;top:699.80px;font-size:12px;color:#adadad;transform:scaleX(0.9839);-webkit-text-stroke:0.32px #adadad;">rcode:</span>
<span class="t" style="left:1205.60px;top:699.80px;font-size:12px;color:#e2e2e2;font-weight:700;">0</span>
<span class="t" style="left:1005.16px;top:716.80px;font-size:12px;color:#adadad;letter-spacing:0.972px;-webkit-text-stroke:0.32px #adadad;">rtt:</span>
<span class="t" style="left:1205.60px;top:716.80px;font-size:12px;color:#e2e2e2;font-weight:700;letter-spacing:0.146px;">0.015789</span>
<span class="t" style="left:1447.46px;top:753.70px;font-size:13px;color:#d8d8d8;transform:scaleX(0.9061);-webkit-text-stroke:0.35px #d8d8d8;">Top</span>
<span class="t" style="left:22.57px;top:785.40px;font-size:14px;color:#e4e4e4;transform:scaleX(0.9769);-webkit-text-stroke:0.5px #e4e4e4;">Data as of 10:20:55</span>
<span class="t" style="left:169.66px;top:785.40px;font-size:14px;color:#e4e4e4;transform:scaleX(0.9822);-webkit-text-stroke:0.5px #e4e4e4;">Listing 1 - 153</span>
<span class="t" style="left:284.57px;top:785.40px;font-size:14px;color:#e4e4e4;transform:scaleX(0.9745);-webkit-text-stroke:0.5px #e4e4e4;">Found 166469 logs in 23 milliseconds</span>
<span class="t" style="left:572.19px;top:814.30px;font-size:13px;color:#d4d4d4;transform:scaleX(0.9410);-webkit-text-stroke:0.4px #d4d4d4;">VMA-S1 3.3.1 - © Copyright 2018 Bricata Inc. All Rights Reserved.</span>
</body>
</html>
